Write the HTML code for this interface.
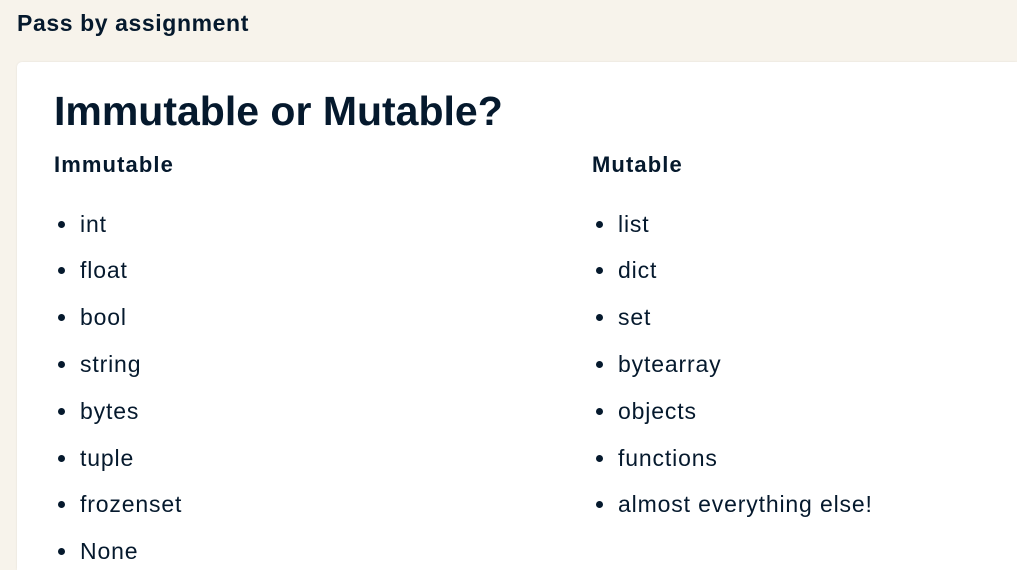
<!DOCTYPE html>
<html><head><meta charset="utf-8"><style>
html,body{margin:0;padding:0;overflow:hidden;width:1017px;height:570px}
body{background:#f7f3eb;font-family:"Liberation Sans",Arial,sans-serif;color:#05192d;position:relative}
.top{position:absolute;left:17px;top:8px;font-size:23px;font-weight:bold;letter-spacing:0.6px;line-height:30px}
.card{position:absolute;left:17px;top:62px;width:1000px;height:508px;background:#fff;border-radius:5px 0 0 0;box-shadow:0 0 2px rgba(0,0,0,0.08)}
h1{position:absolute;left:37px;top:24px;margin:0;font-size:41px;line-height:50px;font-weight:bold}
.col{position:absolute;top:88px}
.col h2{margin:0;font-size:22px;font-weight:bold;letter-spacing:1.1px;line-height:30px}
.item{position:absolute;left:26px;font-size:23px;letter-spacing:0.85px;line-height:30px;white-space:nowrap}
.item:before{content:"";position:absolute;left:-22px;top:12px;width:7px;height:7px;border-radius:50%;background:#05192d}
</style></head><body>
<div class="top">Pass by assignment</div>
<div class="card">
<h1>Immutable or Mutable?</h1>
<div class="col" style="left:37px">
<h2>Immutable</h2>
<div class="item" style="top:59px">int</div>
<div class="item" style="top:105px">float</div>
<div class="item" style="top:152px">bool</div>
<div class="item" style="top:199px">string</div>
<div class="item" style="top:246px">bytes</div>
<div class="item" style="top:293px">tuple</div>
<div class="item" style="top:339px">frozenset</div>
<div class="item" style="top:386px">None</div>
</div>
<div class="col" style="left:575px">
<h2>Mutable</h2>
<div class="item" style="top:59px">list</div>
<div class="item" style="top:105px">dict</div>
<div class="item" style="top:152px">set</div>
<div class="item" style="top:199px">bytearray</div>
<div class="item" style="top:246px">objects</div>
<div class="item" style="top:293px">functions</div>
<div class="item" style="top:339px">almost everything else!</div>
</div>
</div>
</body></html>
